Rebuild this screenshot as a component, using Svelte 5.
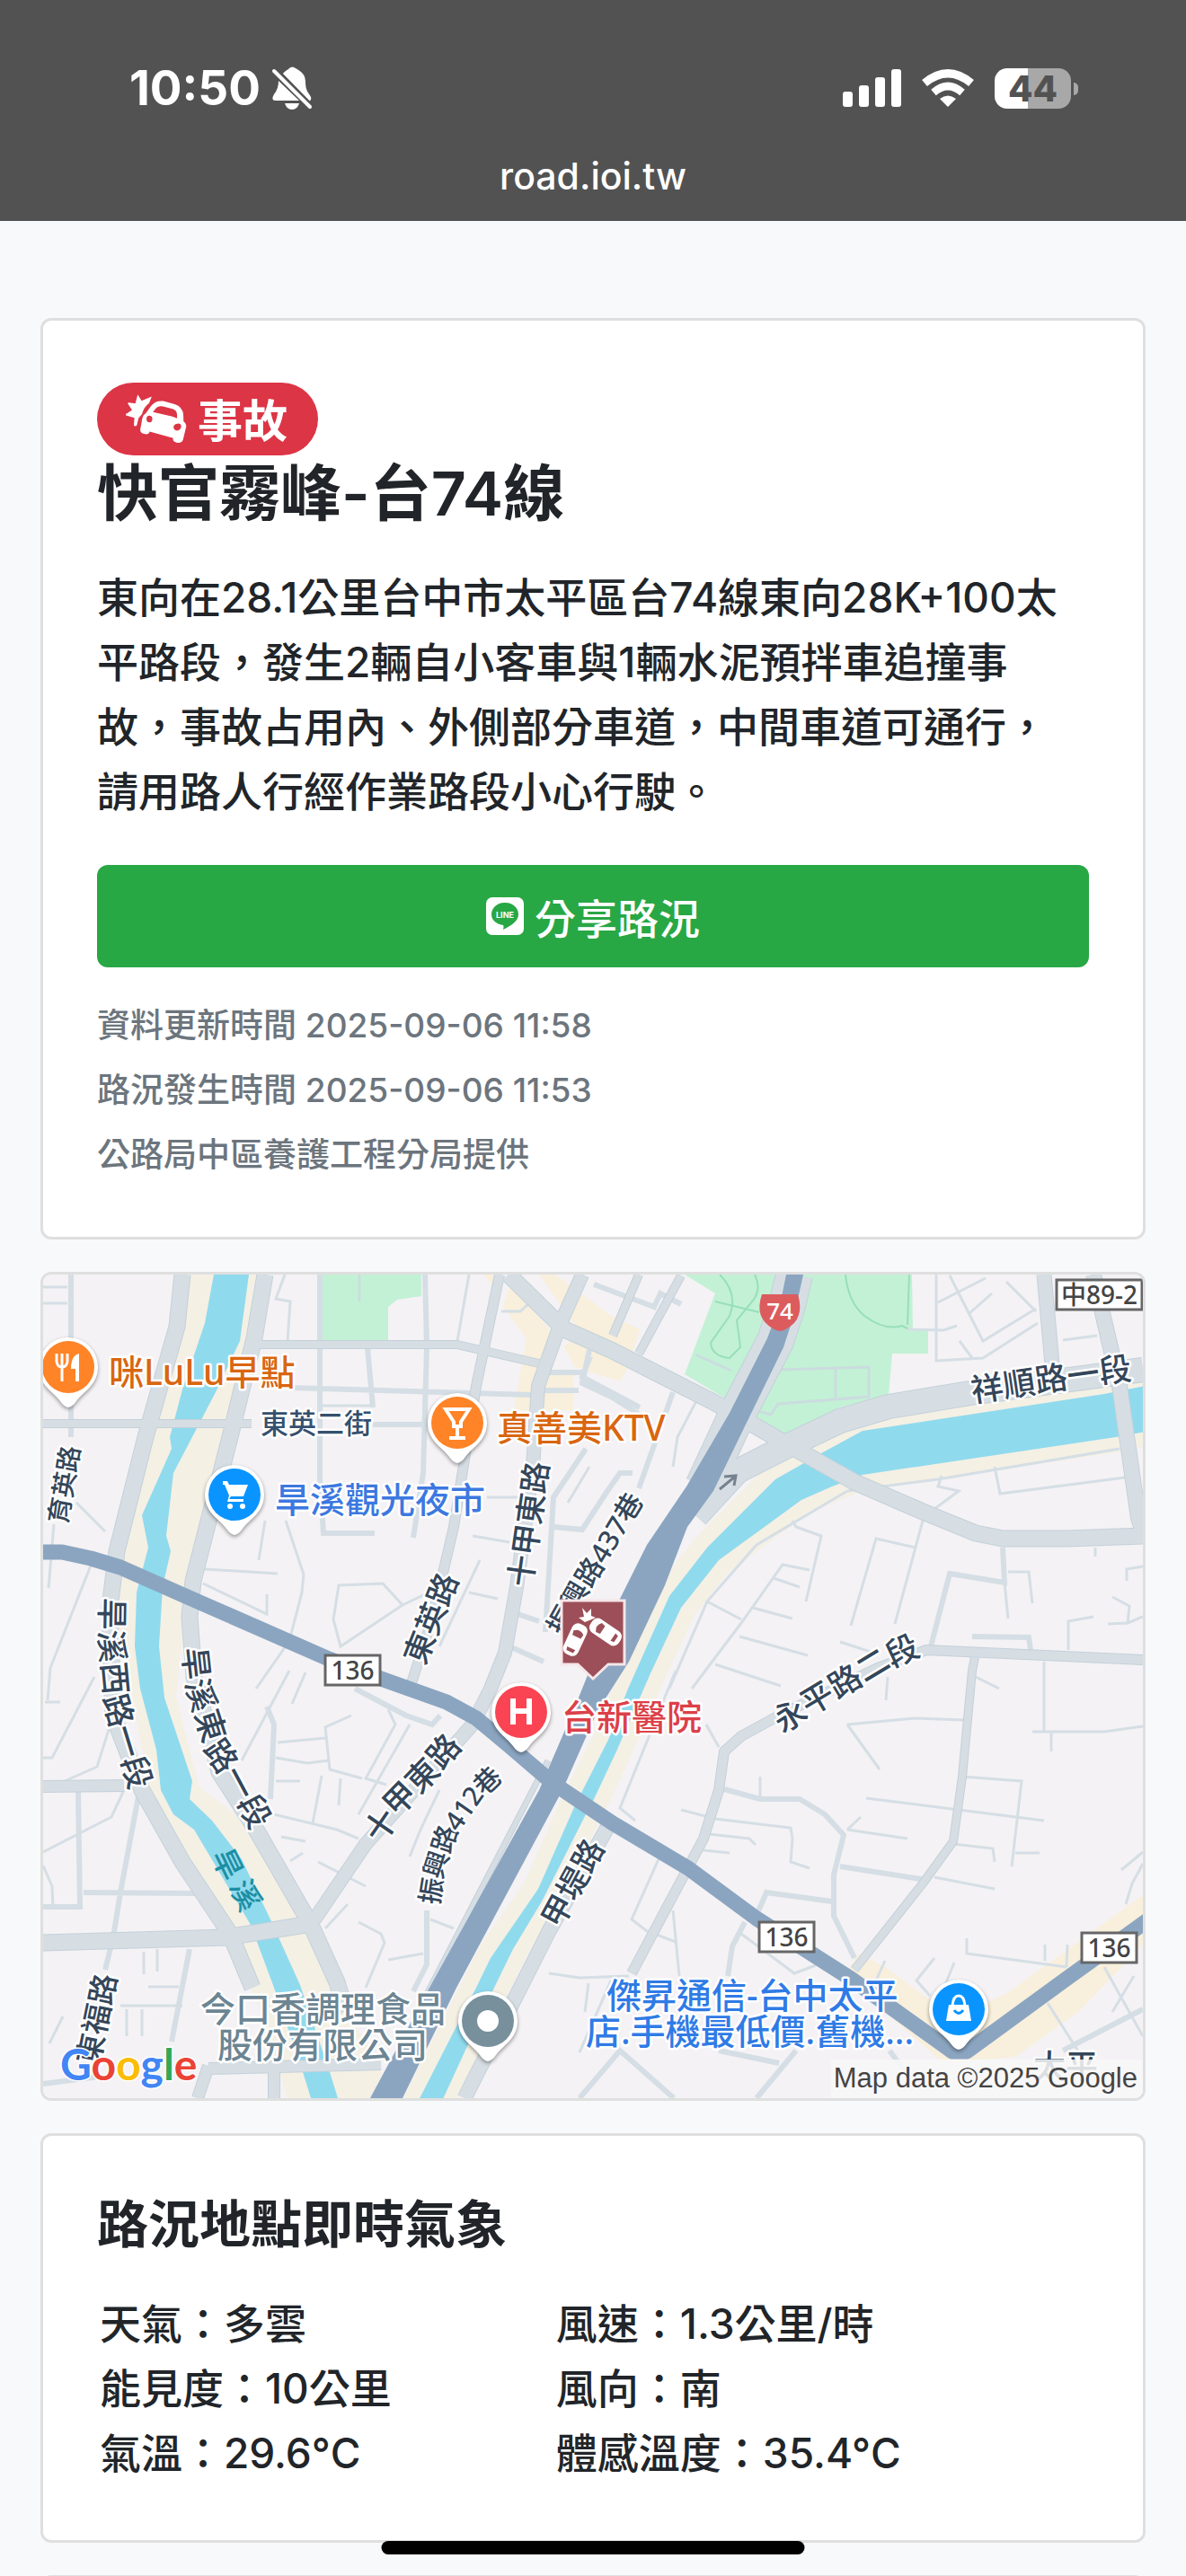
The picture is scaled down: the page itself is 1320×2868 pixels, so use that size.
<script>
  const updates = [
    '資料更新時間 2025-09-06 11:58',
    '路況發生時間 2025-09-06 11:53',
    '公路局中區養護工程分局提供'
  ]

  const weather = [
    ['天氣：多雲', '風速：1.3公里/時'],
    ['能見度：10公里', '風向：南'],
    ['氣溫：29.6°C', '體感溫度：35.4°C']
  ]

  // lanes, grouped by stroke width
  const lanes = [
    { width: 3, d: 'M48 1433H75M48 1451H75M60 1697L54 1768M85 1673L117 1705M101 1743L56 1857L53 1893M317 1419L307 1446L323 1449L320 1493M358 1565H415M522 1419L509 1493M542 1667H579M318 1693L338 1753L336 1773L322 1827L285 1880M295 1693L288 1737M228 1747L309 1752M226 1763L297 1797V1775M377 1765L426 1763L448 1787L379 1833L371 1803ZM448 1787L473 1775M526 1710L567 1717M534 1737L489 1833M522 1773L554 1780M656 1633L632 1673M558 1460H579L590 1450' },
    { width: 3, d: 'M775 1560L754 1600L749 1633M1042 1419V1515L1094 1512L1155 1473M1057 1420L1094 1493L1153 1457M1044 1450L1097 1423M1078 1463L1104 1440M1120 1427L1153 1460M1068 1493L1082 1512M1010 1480L1050 1481L1065 1476M1183 1492L1221 1487M943 1660L1044 1647L1246 1613M943 1660L842 1720L787 1783L745 1880M752 1860L690 2013L707 2027M882 1693L886 1700L914 1710L897 1783M1019 1723L975 1713L947 1810M1027 1693L996 1808M901 1748L871 1742L825 1807L770 1880M861 1757L890 1767M838 1790L882 1802M787 1783L825 1803M823 1822L899 1843M796 1853L869 1877' },
    { width: 3, d: 'M1122 1750H1145L1149 1785M1118 1762L1122 1802M1107 1633L1113 1663L1252 1645M1048 1643L1044 1655L1067 1660L1040 1680M1189 1837V1805L1217 1800M1238 1778L1257 1788L1255 1807L1233 1808M1255 1807L1272 1800M1272 1744L1254 1747V1760M1162 1850V1928M1149 1928H1229L1272 1922M1170 1928V1950M1219 1723V1733M935 1828L972 1840M943 1920L1019 1913L1073 1915M943 1920L979 1970M1040 2090L1107 2103M964 2002L1162 2027M1071 1978L1137 1983L1126 2078M1061 2053L1105 2058L1107 2073M1130 2063H1157M1086 1867L1112 1880M846 2001V1978M988 1867L986 1893' },
    { width: 3, d: 'M758 2015L796 2025L880 2035L882 2047L880 2073L901 2080M789 2042L834 2047L841 2054M783 2060L812 2063M943 2037L1010 2047M958 2023L943 2037M733 2070L703 2137L720 2150L752 2162M749 2127L756 2200M825 2153L884 2197L908 2188M1076 2158V2175L1187 2190M1163 2183V2165M1187 2190L1188 2165M1229 2190L1272 2267M1166 2230L1204 2290M1040 2180L1020 2205L1035 2222M1062 2185L1050 2215M985 2183L975 2205M1253 2120L1260 2097L1272 2075M1248 2082L1272 2062M1238 2240L1262 2200M611 2197L645 2202L700 2200M655 2208L651 2240M680 2205L645 2285M786 1920L800 1945' },
    { width: 3, d: 'M105 1867L58 1957H48M50 1895H67M138 1993L124 2023L48 2062M126 1910L108 1967L72 1983M48 2077L58 2100L59 2125M160 2173V2198M175 2170V2195M165 2212H199M134 2233H203M141 2237V2267M158 2237V2267M70 2245L55 2275M322 1860L269 1960M340 1862L325 1897M309 1940L362 1935M307 1957L342 1963L366 1960M391 1910L362 1923L367 1970L403 1980M432 1903L440 1920L407 1980L430 1987M305 2020L375 2037L399 2047M358 1977L348 2030M379 1980L377 2010M456 1920L399 2020M354 2073L407 2100M387 2120L362 2147M399 2140L424 2153L428 2163L407 2213M432 2182L471 2175M479 2137L505 2147M489 1993L468 2037L456 2067M307 1983H334M313 2045L340 2050M323 2072L337 2063' },
    { width: 6, d: 'M79 1419V1600M409 1500L415 1567M324 1545L591 1553M356 1419V1647L360 1707H417M473 1419L475 1500L471 1640L460 1712M415 1586H500M652 1613L616 1667L607 1817M616 1700L648 1703L676 1660L690 1640L704 1640M611 1528H652M603 1548H644M656 1503L648 1540L680 1555L712 1575M749 1550L711 1657M661 1430L728 1455L735 1440L758 1452M657 1510L648 1533L712 1567M1116 1723L1118 1762L1057 1752L1036 1833M1082 1822L1145 1823L1147 1837M600 1805L570 1795M560 1830L605 1850M806 1992L846 2003H890L918 2020L939 2043L928 2087V2133L951 2180M935 2078L1031 2093M843 2130L853 2107L926 2117M829 2140L815 2167L810 2200M1272 2237L1183 2283' },
    { width: 6, d: 'M87 1993L89 2123H48M154 2000L134 2107L126 2157L117 2193M93 2107L220 2108M211 2170L191 2273M297 1900L305 1920L301 2003M395 1880L452 1910L481 1920L490 1910M475 2127V2187L460 2217M48 2320L110 2312M645 2336L690 2283L750 2336M800 2283L867 2297M886 2283L842 2336M990 2283L1010 2310' }
  ]

  const roads = [
    { width: 8, d: 'M48 1585H280M289 1497H509L600 1518M711 1419L682 1487M758 1420L711 1507' },
    { width: 8, d: 'M1082 1860L1071 1978L1061 2050L1027 2097L951 2193M1085 1845L1082 1860' },
    { width: 10, d: 'M556 1419L530 1543L505 1700L481 1802L456 1880' },
    { width: 10, d: 'M1272 1848L1031 1837L977 1857L867 1910L825 1933L806 1950L800 1993L783 2047L703 2197' },
    { width: 12, d: 'M48 1989L138 1988M232 2303L424 2298M305 2300V2336M232 2300L220 2336' },
    { width: 14, d: 'M648 1419L624 1473L599 1543L593 1633L575 1767L562 1840L546 1880L526 1920L407 2053L350 2137' },
    { width: 15, d: 'M677 2033L611 2150L517 2336M1162 1419L1172 1530' },
    { width: 17, d: 'M203 1419L197 1477L162 1600L130 1727L122 1790L126 1910L158 1993L203 2073L256 2153L281 2213' },
    { width: 17, d: 'M295 1419L283 1490L256 1600L215 1760L211 1800L216 1867L244 1973L285 2037L346 2143L375 2207L385 2240' },
    { width: 17, d: 'M48 2163L252 2157L346 2142' },
    { width: 17, d: 'M566 1419L628 1480L680 1503L796 1562L871 1605L951 1650L1027 1683L1086 1707L1116 1713H1187L1272 1710' },
    { width: 16, d: 'M1217 1419L1246 1543L1267 1690L1272 1705' },
    { width: 26, d: 'M1272 1525L1086 1550L989 1566L935 1582L876 1610L821 1638L775 1688' },
    { width: 40, d: 'M884 1419L876 1453L863 1493L821 1573L783 1655' },
    { width: 5, d: 'M783 1630L690 1800M610 1960L475 2220M648 1900L625 1960' }
  ]

  const streets = [
    { id: 'st-1', name: '育英路', size: 29, d: 'M61 1705L79 1600' },
    { id: 'st-2', name: '十甲東路', size: 35, d: 'M577 1782L601 1612' },
    { id: 'st-3', name: '東英路', size: 35, d: 'M456 1864L505 1740' },
    { id: 'st-4', name: '振興路437巷', size: 31, d: 'M600 1846L640 1775L672 1722L724 1636' },
    { id: 'st-5', name: '旱溪西路一段', size: 36, d: 'M124 1767L123 1828L130 1902L140 1937L160 2002' },
    { id: 'st-6', name: '旱溪東路一段', size: 36, d: 'M213 1815L220 1880L243 1952L264 1983L300 2050' },
    { id: 'st-7', name: '十甲東路', size: 36, d: 'M406 2060L444 2005L473 1975L516 1925' },
    { id: 'st-8', name: '振興路412巷', size: 30, d: 'M474 2136L483 2080L496 2040L526 1997L564 1960' },
    { id: 'st-9', name: '甲堤路', size: 35, d: 'M608 2152L668 2042' },
    { id: 'st-10', name: '東福路', size: 34, d: 'M96 2306L120 2190' },
    { id: 'st-11', name: '祥順路一段', size: 36, d: 'M1070 1551L1170 1536L1270 1522' },
    { id: 'st-12', name: '永平路二段', size: 36, d: 'M854 1927L909 1892L974 1853L1032 1826' }
  ]

  const places = [
    { name: '咪LuLu早點', x: 121, y: 1542, color: '#d9660f' },
    { name: '真善美KTV', x: 553, y: 1604, color: '#d9660f' },
    { name: '旱溪觀光夜市', x: 306, y: 1684, color: '#3c78e0' },
    { name: '台新醫院', x: 625, y: 1926, color: '#dc4048' },
    { name: '今口香調理食品', x: 223, y: 2251, color: '#6c8593' },
    { name: '股份有限公司', x: 242, y: 2291, color: '#6c8593' },
    { name: '傑昇通信-台中太平', x: 675, y: 2236, color: '#2f7be6' },
    { name: '店.手機最低價.舊機...', x: 652, y: 2276, color: '#2f7be6' }
  ]

  const pins = [
    { icon: 'food', x: 76, y: 1522, color: '#ff8327' },
    { icon: 'bar', x: 509, y: 1584, color: '#ff8327' },
    { icon: 'cart', x: 261, y: 1664, color: '#0a94ff' },
    { icon: 'hospital', x: 580, y: 1906, color: '#fa4453' },
    { icon: 'dot', x: 543, y: 2250, color: '#78909c' },
    { icon: 'bag', x: 1067, y: 2237, color: '#0a94ff' }
  ]

  const shields = [
    { label: '136', x: 362, y: 1843, width: 61 },
    { label: '136', x: 845, y: 2140, width: 61 },
    { label: '136', x: 1204, y: 2152, width: 61 },
    { label: '中89-2', x: 1176, y: 1425, width: 95 }
  ]

  const google = [
    ['G', '#4285f4'],
    ['o', '#ea4335'],
    ['o', '#fbbc05'],
    ['g', '#4285f4'],
    ['l', '#34a853'],
    ['e', '#ea4335']
  ]
</script>

<div class="screen">
  <header>
    <div class="status">
      <div class="clock">
        <time>10:50</time>
        <svg class="bell" viewBox="0 0 46 48" aria-hidden="true">
          <path fill="#fff" d="M12 9C15 5 18 4 20 2Q23-1 27 2C34 6 38 9 38 18C38 27 42 30 44 34Q45 37 42 39Z" />
          <path fill="#fff" d="M8 16Q8 25 3 31Q-1 38 5 38H31ZM15 41H31Q29 48 23 48T15 41Z" />
          <path stroke="#525252" stroke-width="3" d="M5 2L46 44" />
          <path stroke="#fff" stroke-width="4" stroke-linecap="round" d="M3 5L43 45" />
        </svg>
      </div>
      <div class="signals">
        <svg class="bars" viewBox="0 0 65 42" fill="#fff" aria-hidden="true">
          <rect y="25" width="11" height="17" rx="3" />
          <rect x="18" y="18" width="11" height="24" rx="3" />
          <rect x="36" y="9" width="11" height="33" rx="3" />
          <rect x="54" width="11" height="42" rx="3" />
        </svg>
        <svg class="wifi" viewBox="0 0 58 42" aria-hidden="true">
          <path fill="none" stroke="#fff" stroke-width="9" d="M3 15.500Q29-6 55 15.500" />
          <path fill="none" stroke="#fff" stroke-width="8.500" d="M13 26Q29 12 45 26" />
          <path fill="#fff" d="M20 33Q29 26 38 33L29 42Z" />
        </svg>
        <div class="battery"><span>44</span></div>
      </div>
    </div>
    <div class="address">road.ioi.tw</div>
  </header>

  <main>
    <section class="card">
      <span class="badge">
        <svg viewBox="120 83 205 164" fill="#fff" aria-hidden="true">
          <path d="M160 83L173 104L207 90L198 112C184 121 177 138 175 148L163 162L157 186Q152 192 147 186L149 161L121 153Q118 149 123 147L141 135L127 114Q126 109 132 110L152 113Z" />
          <path fill-rule="evenodd" d="M187 146L206 120Q220 102 246 105L284 115Q311 124 313 150L314 173Q326 180 322 194L312 235Q306 247 290 244Q276 240 279 229L200 207Q197 219 182 215Q166 211 169 198L175 165Q178 150 187 146ZM211 142L277 157L292 163V150Q291 135 277 131L245 123Q230 120 222 128ZM199 154A10 11 0 1 0 200 176Q209 176 209 165T199 154ZM296 180Q281 182 280 192Q281 203 292 204Q304 203 306 190Q305 180 296 180Z" />
        </svg>
        <span class="kind">事故</span>
      </span>
      <h1>快官霧峰-台74線</h1>
      <p class="detail">東向在28.1公里台中市太平區台74線東向28K+100太平路段，發生2輛自小客車與1輛水泥預拌車追撞事故，事故占用內、外側部分車道，中間車道可通行，請用路人行經作業路段小心行駛。</p>
      <button type="button" class="share">
        <svg viewBox="0 0 42 42" aria-hidden="true">
          <rect width="42" height="42" rx="7" fill="#fff" />
          <path fill="#28a745" d="M21 6C12 6 6 12 6 19C6 26 12 30 19 31Q20 32 19 36C27 32 36 27 36 19C36 12 30 6 21 6Z" />
          <text x="21" y="23" text-anchor="middle" fill="#fff" font-size="9" font-weight="700">LINE</text>
        </svg>
        分享路況
      </button>
      <div class="updates">
        {#each updates as update}
          <p>{update}</p>
        {/each}
      </div>
    </section>

    <section class="map">
      <svg viewBox="48 1419 1224 917" role="img" aria-label="Map">
        <defs>
          {#each streets as street}
            <path id={street.id} d={street.d} />
          {/each}
        </defs>

        <rect x="48" y="1419" width="1224" height="917" fill="#f4f2f4" />

        <!-- shops and parks -->
        <g fill="#f8efdc">
          <path d="M568 1430L620 1490L606 1530L598 1570H572L586 1490L560 1455Z" />
          <path d="M600 1419H618L680 1465L712 1480L704 1506L640 1475Z" />
          <path d="M650 1478L700 1520L690 1538L640 1522L628 1500Z" />
          <path d="M606 1528H638V1570H604ZM538 1419H560L556 1440Z" />
          <path d="M955 2175L985 2190L1060 2245L1120 2220L1272 2110V2165L1200 2240L1130 2290L1050 2297L940 2200Z" />
        </g>
        <g fill="#c3f1d5">
          <path d="M356 1419H469V1443L442 1447L432 1455V1497H356Z" />
          <path d="M762 1419H1015L1016 1480H1033V1507H993L989 1553L935 1567L871 1598L836 1573L804 1555L762 1530L796 1440Z" />
        </g>
        <g fill="none" stroke="#97dfba" stroke-width="2">
          <path d="M941 1419Q944 1450 962 1465Q985 1482 1004 1476L1012 1480M1012 1419L1010 1475" />
          <path d="M801 1419Q822 1440 812 1465L791 1495Q792 1510 812 1512L824 1500L820 1470L838 1448Q848 1435 840 1419M796 1449L845 1461" />
        </g>
        <path fill="none" stroke="#cbdcdf" stroke-width="3" d="M866 1525L967 1522V1555L866 1563L858 1575L840 1570M930 1524V1556M774 1508L814 1526M400 1419V1449" />

        <!-- river banks, then water -->
        <path fill="#f4f0e4" d="M203 1419L197 1477L162 1600L130 1727L122 1790L148 1900L168 1993L203 2053L256 2153L290 2240L320 2336H424L424 2298L385 2240L346 2143L285 2037L222 1990L196 1890L205 1800L256 1600L283 1490L290 1419Z" />
        <path fill="#90daee" d="M238 1419L228 1473L203 1547L189 1600L191 1613L158 1687L165 1723L152 1773L150 1833L156 1880L174 1948L179 1993L193 2020L216 2037L279 2143L305 2213L338 2310L346 2336H376L367 2307L334 2210L301 2137L269 2070L236 2027L211 2003L214 1983L183 1890L177 1833L181 1767L190 1727L185 1710L193 1640L240 1550L267 1493L277 1419Z" />
        <path fill="#90daee" stroke="#f4f0e4" stroke-width="34" stroke-linejoin="round" paint-order="stroke" d="M1290 1540L1229 1552L960 1593L914 1618L863 1647L787 1723L745 1777L699 1880L677 1937L640 2010L599 2103L546 2180L530 2213L460 2350H487L550 2213L571 2170L603 2117L652 2020L661 2003L686 1950L724 1863L758 1790L800 1737L892 1670L926 1655L960 1642L1242 1600L1290 1591Z" />

        <g fill="none" stroke="#d5dee5">
          {#each lanes as lane}
            <path stroke-width={lane.width} d={lane.d} />
          {/each}
        </g>
        <g fill="none" stroke="#c4d0d9" stroke-linejoin="round">
          {#each roads as road}
            <path stroke-width={road.width + 2} d={road.d} />
          {/each}
        </g>
        <g fill="none" stroke="#d6dee4" stroke-linejoin="round">
          {#each roads as road}
            <path stroke-width={road.width} d={road.d} />
          {/each}
        </g>
        <path fill="none" stroke="#76828f" stroke-width="3" d="M801 1658L818 1644M806 1644L819 1643L817 1654" />

        <!-- highways -->
        <g fill="#8ba5c1">
          <path d="M875 1419H894L885 1460L872 1500L828 1590L794 1660L765 1700L740 1765L700 1850L665 1905L626 1993L508 2213L448 2336H412L478 2213L600 1993L638 1905L680 1800L720 1720L764 1655L812 1573L854 1490L868 1453Z" />
        </g>
        <path fill="none" stroke="#8ba5c1" stroke-width="17" stroke-linejoin="round" d="M48 1728H69L101 1735L134 1745L220 1783L366 1847L424 1869L497 1895L530 1913L566 1943L615 1985L682 2030L766 2080L842 2136L947 2203L1060 2284H1076L1187 2203L1280 2136" />

        {#each streets as street}
          <text class="street" font-size={street.size} dy="12">
            <textPath href="#{street.id}" startOffset="50%">{street.name}</textPath>
          </text>
        {/each}
        <g class="water">
          <text x="254" y="2088" transform="rotate(64 254 2075)">旱</text>
          <text x="273" y="2122" transform="rotate(64 273 2110)">溪</text>
        </g>

        {#each shields as shield}
          <rect x={shield.x} y={shield.y} width={shield.width} height="33" fill="#fff" stroke="#666" stroke-width="3" />
          <text class="shield" x={shield.x + shield.width / 2} y={shield.y + 27}>{shield.label}</text>
        {/each}
        <path fill="#dc5c5e" d="M848 1441H888Q896 1468 876 1479Q868 1485 860 1479Q839 1467 848 1441Z" />
        <text class="freeway" x="868" y="1469">74</text>

        {#each pins as pin}
          <g transform="translate({pin.x} {pin.y})">
            <path class="pin" d="M0 45Q-5 44-9 38C-17 27-33 20-33 0A33 33 0 0 1 33 0C33 20 17 27 9 38Q5 44 0 45Z" />
            <circle r="29" fill={pin.color} />
            {#if pin.icon === 'food'}
              <path fill="none" stroke="#fff" stroke-width="3" d="M-13-15V-6Q-12 0-7 0T-1-6V-15M-7-15V16" />
              <path fill="#fff" d="M12-15V16H8V2H3Q3-13 12-15Z" />
            {:else if pin.icon === 'bar'}
              <path fill="none" stroke="#fff" stroke-width="4" d="M-13-15H13L4-1V4H-4V-1ZM0 4V17M-9 17H9" />
            {:else if pin.icon === 'cart'}
              <path fill="#fff" d="M-13-15H-8L-6-11H15L10 2H-4L-6 5H10V8H-8L-6 1L-11-11H-13Z" />
              <circle cx="-5" cy="13" r="3" fill="#fff" />
              <circle cx="9" cy="13" r="3" fill="#fff" />
            {:else if pin.icon === 'hospital'}
              <path fill="none" stroke="#fff" stroke-width="6" d="M-9-15V14M9-15V14M-9-1H9" />
            {:else if pin.icon === 'bag'}
              <path fill="#fff" d="M-11-5H11L14 13H-14Z" />
              <path fill="none" stroke="#fff" stroke-width="3" d="M-7-4Q-6-15 0-15T7-4" />
              <path fill="none" stroke={pin.color} stroke-width="3" d="M-5 1Q0 8 5 1" />
            {:else}
              <circle r="12" fill="#fff" />
            {/if}
          </g>
        {/each}

        {#each places as place}
          <text class="place" x={place.x} y={place.y} fill={place.color}>{place.name}</text>
        {/each}
        <text class="place" x="290" y="1596" fill="#35506e" font-size="31">東英二街</text>

        <!-- accident marker -->
        <path fill="#9c4f58" stroke="#f5e6e8" stroke-width="3" d="M625 1782H695V1853H677L660 1869L643 1853H625Z" />
        <g fill="#fff">
          <g transform="translate(640 1826) rotate(25)">
            <rect x="-9" y="-19" width="18" height="37" rx="7" />
            <path fill="#9c4f58" d="M-6-9Q0-14 6-9L5-4H-5ZM-5 10H5L4 14H-4Z" />
          </g>
          <g transform="translate(674 1817) rotate(-56)">
            <rect x="-9" y="-19" width="18" height="38" rx="7" />
            <path fill="#9c4f58" d="M-6-9Q0-14 6-9L5-4H-5ZM-5 10H5L4 14H-4Z" />
          </g>
          <path d="M651 1806L644 1801L650 1800L648 1790L653 1796L658 1791V1799L663 1801L656 1804Z" />
        </g>

        <text class="street" x="1186" y="2314" font-size="36">太平</text>
        <rect x="925" y="2293" width="347" height="43" fill="#f8f8f8" opacity=".86" />
        <text class="credit" x="1266" y="2324">Map data ©2025 Google</text>
        <text class="google" x="67" y="2316">{#each google as [letter, color]}<tspan fill={color}>{letter}</tspan>{/each}</text>
      </svg>
    </section>

    <section class="card">
      <h2>路況地點即時氣象</h2>
      <table>
        <tbody>
          {#each weather as row}
            <tr>
              {#each row as cell}
                <td>{cell}</td>
              {/each}
            </tr>
          {/each}
        </tbody>
      </table>
    </section>

    <section class="card"></section>
  </main>

  <div class="home"></div>
</div>

<style>
  :global(body) {
    margin: 0;
    background: #f8f9fa;
  }

  .screen {
    display: flex;
    flex-direction: column;
    height: 100vh;
    color: #212529;
    font-family: Inter, 'Noto Sans CJK TC', sans-serif;
    font-weight: 500;
    font-optical-sizing: none;
  }

  header {
    background: #525252;
    color: #fff;
    padding: 68px 120px 20px 144px;
  }

  .status,
  .clock,
  .signals {
    display: flex;
    align-items: center;
  }

  .status {
    justify-content: space-between;
    height: 60px;
  }

  .clock {
    gap: 12px;
    font-size: 53px;
    font-weight: 700;
  }

  .bell {
    width: 46px;
    height: 48px;
  }

  .signals {
    gap: 23px;
  }

  .bars {
    width: 65px;
    height: 42px;
  }

  .wifi {
    width: 58px;
    height: 42px;
  }

  .battery {
    position: relative;
    width: 85px;
    height: 45px;
    margin-right: 8px;
    border-radius: 14px;
    background: linear-gradient(to right, #fff 37px, #a8a8a8 37px);
    color: #525252;
    font-size: 40px;
    font-weight: 800;
    line-height: 45px;
    text-align: center;
  }

  .battery::after {
    content: '';
    position: absolute;
    top: 16px;
    right: -8px;
    width: 5px;
    height: 14px;
    border-radius: 0 5px 5px 0;
    background: #a8a8a8;
  }

  .address {
    padding: 38px 24px 0 0;
    font-size: 41px;
    line-height: 60px;
    text-align: center;
  }

  main {
    display: flex;
    flex: 1;
    flex-direction: column;
    gap: 36px;
    min-height: 0;
    padding: 108px 45px 0;
    overflow-y: auto;
    scrollbar-width: none;
    background: #f8f9fa;
  }

  .card,
  .map {
    flex-shrink: 0;
    border: 3px solid #dfdfdf;
    border-radius: 12px;
  }

  .card {
    padding: 69px 60px 55px;
    background: #fff;
  }

  .badge {
    display: flex;
    align-items: center;
    gap: 12px;
    width: fit-content;
    height: 81px;
    padding: 0 34px 0 32px;
    box-sizing: border-box;
    border-radius: 41px;
    background: #dc3545;
    color: #fff;
    font-size: 50px;
    font-weight: 700;
  }

  .badge svg {
    width: 68px;
    height: 55px;
  }

  .kind {
    padding-bottom: 4px;
  }

  h1,
  h2,
  p {
    margin: 0;
  }

  h1 {
    font-size: 68px;
    font-weight: 600;
    line-height: 84px;
  }

  .detail {
    margin: 38px 0 46px;
    padding-right: 4px;
    font-size: 46px;
    line-height: 72px;
  }

  .share {
    display: flex;
    align-items: center;
    justify-content: center;
    gap: 12px;
    width: 100%;
    height: 114px;
    border: 0;
    border-radius: 12px;
    background: #28a745;
    color: #fff;
    font: inherit;
    font-size: 46px;
  }

  .share svg {
    width: 42px;
    height: 42px;
  }

  .updates {
    margin-top: 29px;
    color: #6c757d;
    font-size: 37px;
    line-height: 72px;
  }

  .map {
    overflow: hidden;
  }

  .map svg {
    display: block;
    width: 100%;
  }

  .map text {
    font-family: 'Noto Sans', 'Noto Sans CJK TC', sans-serif;
    font-weight: 500;
  }

  .street {
    fill: #34465a;
    stroke: #fff;
    stroke-width: 5px;
    stroke-linejoin: round;
    paint-order: stroke;
    text-anchor: middle;
  }

  .place {
    stroke: #fff;
    stroke-width: 5px;
    stroke-linejoin: round;
    paint-order: stroke;
  }

  .place:not([font-size]) {
    font-size: 39px;
  }

  .water {
    fill: #1d8ea3;
    font-size: 34px;
    text-anchor: middle;
  }

  .shield {
    fill: #444;
    font-size: 28px;
    text-anchor: middle;
  }

  .freeway {
    fill: #fff;
    font-size: 26px;
    text-anchor: middle;
  }

  .pin {
    fill: #fff;
    filter: drop-shadow(0 2px 2px #00000066);
  }

  .map .credit {
    fill: #444;
    font-family: 'Liberation Sans', sans-serif;
    font-size: 31px;
    font-weight: 400;
    text-anchor: end;
  }

  .map .google {
    font-family: Lato, sans-serif;
    font-size: 48px;
    font-weight: 700;
    stroke: #fff;
    stroke-width: 3px;
    paint-order: stroke;
  }

  h2 {
    font-size: 57px;
    font-weight: 700;
    line-height: 60px;
  }

  table {
    width: 100%;
    margin: 44px 0 6px;
    border-spacing: 0;
    font-size: 46px;
    line-height: 72px;
  }

  td {
    padding: 0 3px;
  }

  td:first-child {
    width: 46%;
  }

  .home {
    position: fixed;
    bottom: 24px;
    left: 50%;
    width: 471px;
    height: 15px;
    border-radius: 8px;
    background: #000;
    transform: translateX(-50%);
  }
</style>
